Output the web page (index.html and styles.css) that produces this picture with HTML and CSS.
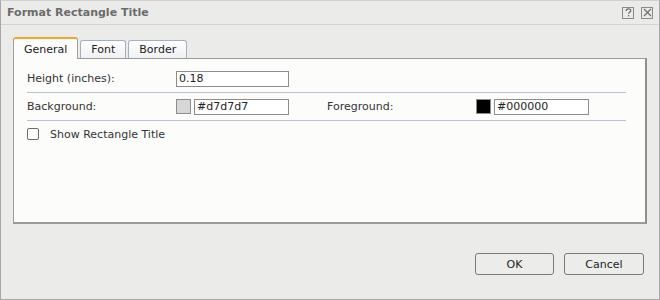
FILE: index.html
```html
<!DOCTYPE html>
<html lang="en">
<head>
    <meta charset="UTF-8">
    <title>Format Rectangle Title</title>
    <link rel="stylesheet" href="styles.css">
</head>
<body>
    <div class="dialog">
        <!-- Title bar -->
        <div class="title-bar">
            <span class="title">Format Rectangle Title</span>
            <div class="title-icons">
                <span class="icon-box">
                    <svg width="9" height="9" viewBox="0 0 9 9"><path d="M2.2 3 C2.2 1.2 3.4 0.8 4.5 0.8 C5.8 0.8 6.8 1.5 6.8 2.7 C6.8 4 4.6 4.2 4.6 5.8" fill="none" stroke="#707070" stroke-width="1.3"/><rect x="3.9" y="7" width="1.4" height="1.4" fill="#707070"/></svg>
                </span>
                <span class="icon-box">
                    <svg width="9" height="9" viewBox="0 0 9 9"><path d="M1 1 L8 8 M8 1 L1 8" stroke="#707070" stroke-width="1.3"/></svg>
                </span>
            </div>
        </div>

        <div class="dialog-body">
            <!-- Tabs -->
            <div class="tabs">
                <div class="tab active">General</div>
                <div class="tab">Font</div>
                <div class="tab">Border</div>
            </div>

            <div class="panel">
                <div class="row">
                    <span class="label">Height (inches):</span>
                    <input class="text-input wide" type="text" value="0.18">
                </div>
                <div class="row">
                    <span class="label">Background:</span>
                    <span class="swatch light"></span>
                    <input class="text-input" type="text" value="#d7d7d7">
                    <span class="label second">Foreground:</span>
                    <span class="swatch dark"></span>
                    <input class="text-input" type="text" value="#000000">
                </div>
                <div class="row check-row">
                    <span class="checkbox"></span>
                    <span>Show Rectangle Title</span>
                </div>
            </div>
        </div>

        <!-- Buttons -->
        <div class="buttons">
            <button class="btn ok">OK</button>
            <button class="btn">Cancel</button>
        </div>
    </div>
</body>
</html>
```

FILE: styles.css
```css
* {
    margin: 0;
    padding: 0;
    box-sizing: border-box;
}

body {
    font-family: "DejaVu Sans", Verdana, sans-serif;
    font-size: 11px;
    color: #333;
    background: #ebecea;
}

.dialog {
    width: 660px;
    height: 300px;
    border: 1px solid #a8a8a8;
    border-top-color: #d0d0d0;
    background: #ebecea;
    display: flex;
    flex-direction: column;
}

/* Title bar */
.title-bar {
    height: 24px;
    border-bottom: 1px solid #d3d4d2;
    display: flex;
    align-items: center;
    justify-content: space-between;
    padding: 0 6px 0 6px;
}

.title {
    font-weight: bold;
    font-size: 11px;
    color: #6b6b6b;
}

.title-icons {
    display: flex;
    gap: 7px;
}

.icon-box {
    width: 12px;
    height: 12px;
    border: 1px solid #8a8a8a;
    display: flex;
    align-items: center;
    justify-content: center;
}

/* Body */
.dialog-body {
    padding: 12px 12px 0 12px;
}

.tabs {
    display: flex;
    align-items: flex-end;
    gap: 2px;
    height: 21px;
}

.tab {
    height: 18px;
    padding: 0 10px;
    border: 1px solid #a3b0bd;
    border-bottom: none;
    border-radius: 3px 3px 0 0;
    background: linear-gradient(#ffffff, #eef0f2);
    display: flex;
    align-items: center;
    color: #222;
}

.tab.active {
    height: 22px;
    margin-bottom: -1px;
    padding: 0 10px;
    background: #fcfdfb;
    border-color: #a0a0a0;
    border-top: 2px solid #f2a528;
    position: relative;
}

.panel {
    height: 166px;
    border: 1px solid #9a9a9a;
    border-width: 1px 2px 2px 1px;
    border-right-color: #8e8e8e;
    background: #fcfdfb;
    padding: 6px 19px 0 13px;
}

.row {
    display: flex;
    align-items: center;
    height: 28px;
    border-bottom: 1px solid #bcc3d0;
}

.label {
    width: 149px;
    color: #333;
}

.label.second {
    width: 149px;
    margin-left: 38px;
}

.text-input {
    width: 95px;
    height: 16px;
    border: 1px solid #8c8c8c;
    background: #fff;
    font-family: "DejaVu Sans", Verdana, sans-serif;
    font-size: 11px;
    color: #222;
    padding: 0 2px;
    outline: none;
}

.text-input.wide {
    width: 113px;
}

.swatch {
    width: 15px;
    height: 15px;
    border: 1px solid #8c8c8c;
    margin-right: 3px;
}

.swatch.light {
    background: #d7d7d7;
}

.swatch.dark {
    background: #000;
}

.check-row {
    border-bottom: none;
    height: 26px;
    gap: 11px;
}

.checkbox {
    width: 12px;
    height: 12px;
    border: 1px solid #6a6a6a;
    border-radius: 2px;
    background: #fff;
}

/* Buttons */
.buttons {
    margin-top: auto;
    margin-bottom: 24px;
    display: flex;
    justify-content: flex-end;
    gap: 10px;
    padding-right: 15px;
}

.btn {
    width: 79px;
    height: 22px;
    border: 1px solid #7a7a7a;
    border-radius: 3px;
    background: #ecedeb;
    font-family: "DejaVu Sans", Verdana, sans-serif;
    font-size: 11px;
    color: #222;
}

.btn + .btn {
    width: 80px;
}
```
